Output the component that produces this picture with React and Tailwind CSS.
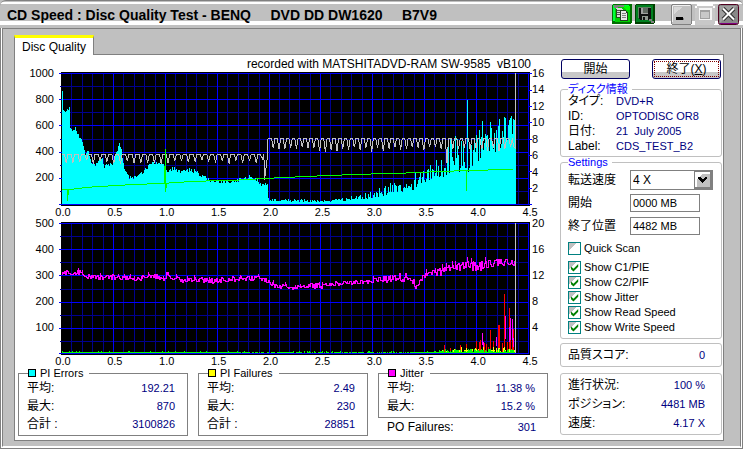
import React from "react";

/* ---------- chart geometry ---------- */

const X0 = 61;
const X_END = 516;
const X_STEP = 104; // width of 1.0 GB
const UNITS = [0, 1, 2, 3, 4, 5, 6, 7, 8, 9];

function noise(n) {
  const s = Math.sin(n * 127.1 + 11.7) * 43758.5453;
  return s - Math.floor(s);
}

function lerp(points, x) {
  for (let i = 1; i < points.length; i++) {
    if (x <= points[i][0]) {
      const [ax, ay] = points[i - 1];
      const [bx, by] = points[i];
      return ay + ((by - ay) * (x - ax)) / (bx - ax || 1);
    }
  }
  return points[points.length - 1][1];
}

const PIE = [
  [62, 91], [63, 110], [65, 112], [67, 109], [68, 110], [69, 107], [70, 128], [72, 131], [74, 130],
  [75, 128], [77, 133], [80, 138], [83, 145], [85, 154], [88, 150], [89, 155], [91, 162], [96, 164],
  [102, 158], [104, 166], [108, 165], [113, 163], [116, 153], [119, 142], [121, 150], [123, 165],
  [125, 172], [130, 178], [137, 177], [142, 173], [145, 170], [150, 163], [157, 163], [163, 165],
  [168, 172], [173, 168], [180, 171], [190, 170], [197, 172], [200, 175], [207, 179], [212, 181],
  [223, 182], [233, 181], [243, 179], [250, 177], [257, 180], [260, 185], [267, 184], [268, 200],
  [330, 201], [350, 199],
];
const PIE_LOW = [[350, 200], [375, 198], [400, 193], [420, 189], [430, 180], [440, 178], [460, 174], [470, 172]];
const PIE_HIGH = [[350, 196], [375, 190], [392, 182], [410, 174], [430, 164], [440, 150], [450, 136], [470, 134]];

// one bar top per pixel column, from x = 470 on
const PIE_LATE = [
  168, 148, 145, 166, 150, 142, 152, 135, 139, 161, 130, 158, 137, 121, 150, 143, 134, 136, 135, 142,
  151, 122, 128, 146, 149, 133, 152, 130, 140, 126, 119, 148, 144, 131, 137, 117, 118, 142, 140, 125,
  120, 118, 116, 134, 119, 120, 127,
];

function pieTop(x) {
  if (x === 468) return 100;
  if (x <= 350) return Math.round(lerp(PIE, x) + (x > 70 ? (noise(x) - 0.5) * (x > 268 ? 3 : 4) : 0));
  if (x >= 470) return PIE_LATE[x - 470];
  const r = noise(x * 3);
  return Math.round(lerp(PIE_LOW, x) + (lerp(PIE_HIGH, x) - lerp(PIE_LOW, x)) * r * r);
}

function piePath() {
  let d = `M62 204`;
  for (let x = 62; x <= X_END; x++) d += `V${pieTop(x)}H${x + 1}`;
  return d + "V204Z";
}

function writeSpeedPath() {
  let d = "M62 154.5";
  for (let x = 64.5, i = 0; x < 258; x += 6.8, i++) {
    d += `H${x}L${x + 1.8} ${160 + noise(i) * 4}L${x + 3.4} 154.5`;
  }
  d += "H261L263 160L264 154.5L265 166V180L267.5 160V143L268.5 138.5H272";
  for (let x = 272, i = 0; x < 510; x += 5.8, i++) {
    const deep = i === 30 ? 163 : 147 + noise(i + 40) * 5;
    d += `H${x}L${x + 1.8} ${deep}L${x + 3.4} 138.5`;
  }
  return d + "H513L515 148";
}

const JITTER = [
  [62, 274], [70, 272], [80, 273], [87, 276], [97, 278], [113, 277], [123, 277], [137, 279], [150, 276],
  [163, 278], [167, 275], [173, 278], [183, 281], [193, 279], [213, 281], [230, 279], [263, 278],
  [270, 284], [287, 287], [313, 286], [327, 286], [340, 283], [360, 282], [373, 281], [393, 278],
  [407, 277], [411, 281], [415, 284], [418, 285], [422, 276], [433, 272], [453, 269], [467, 266],
  [480, 266], [493, 263], [507, 261], [516, 262],
];

function jitterPath() {
  let d = "";
  let prev = 274;
  for (let x = 62; x < X_END; x++) {
    const amp = x < 380 ? 5 : x < 400 ? 7 : 9;
    const y = Math.round(lerp(JITTER, x) - 0.5 + (noise(x * 7) - 0.5) * amp);
    const spike = noise(x + 900) > 0.9 ? (x < 380 ? 2 : 4) : 0;
    const top = Math.min(y, prev) - spike;
    const bottom = Math.max(y, prev) + 1;
    d += `M${x} ${top}h1V${bottom}h-1z`;
    prev = y;
  }
  return d;
}

function pifGreenPath() {
  let d = "";
  for (let x = 62; x <= X_END; x++) {
    const r = noise(x * 5);
    if (x < 240 || x > 410 || r > 0.3) d += `M${x} 354v-${r > 0.9 ? 2 : 1}h1v${r > 0.9 ? 2 : 1}z`;
  }
  for (let x = 440; x < X_END; x++) {
    const h = 1 + Math.round(noise(x * 2) * 3);
    if (noise(x * 13) > 0.35) d += `M${x} 354v-${h}h1v${h}z`;
  }
  return d;
}

function pifYellowPath() {
  let d = "";
  for (let x = 440; x < X_END; x++) {
    const grow = x < 455 ? 3 : 6;
    const r = noise(x * 11);
    if (r > 0.4) d += `M${x} 354v-${Math.round(r * grow)}h1v${Math.round(r * grow)}z`;
  }
  return d;
}

const PIF_RED = [
  [445, 8], [451, 5], [461, 8], [467, 9], [477, 13], [480, 12], [481, 14], [485, 10], [487, 9], [489, 6],
  [491, 24], [494, 13], [499, 29], [500, 29], [503, 10], [505, 60], [508, 11], [510, 46], [511, 30], [513, 20], [514, 25],
];
const PIF_PURPLE = [[483, 21], [484, 12], [497, 17], [506, 38], [510, 27], [511, 36], [513, 35], [514, 16]];

function Grid({ top, rightTicks }) {
  const rows = UNITS.concat(10);
  const xs = Array.from({ length: 46 }, (_, i) => i);
  const lineY = (i) => Math.round(top + i * 13.1);
  return (
    <g shapeRendering="crispEdges">
      <rect x={X0} y={top - 1} width="470" height="134" fill="#000" />
      {xs.filter((i) => i % 5).map((i) => (
        <rect key={i} x={Math.round(X0 + i * 10.4)} y={top} width="1" height="132" fill="#000090" />
      ))}
      {rows.filter((i) => i % 2).map((i) => (
        <rect key={i} x="60" y={lineY(i)} width="469" height="1" fill="#000090" />
      ))}
      {xs.filter((i) => i % 5 === 0 && i > 0).map((i) => (
        <rect key={i} x={Math.round(X0 + i * 10.4)} y={top} width="1" height="132" fill="#0000ff" />
      ))}
      {rows.filter((i) => i % 2 === 0).map((i) => (
        <rect key={i} x="59" y={lineY(i)} width="470" height="1" fill="#0000ff" />
      ))}
      {rightTicks.map((y) => (
        <rect key={y} x="529" y={y} width="4" height="1" fill="#0000ff" />
      ))}
    </g>
  );
}

function Labels({ values, x, anchor, start, step }) {
  return values.map((v, i) => (
    <text key={v} x={x} y={start + i * step} textAnchor={anchor}>
      {v}
    </text>
  ));
}

const CAPACITY = ["0.0", "0.5", "1.0", "1.5", "2.0", "2.5", "3.0", "3.5", "4.0", "4.5"];

function CapacityAxis({ y }) {
  return CAPACITY.map((v, i) => (
    <text key={v} x={63 + (i * X_STEP) / 2} y={y} textAnchor="middle">
      {v}
    </text>
  ));
}

function Charts() {
  return (
    <svg viewBox="15 71 545 297" className="block w-full overflow-visible text-[11px]" role="img" aria-label="Disc Quality">
      <Grid top={73} rightTicks={[73, 90, 106, 122, 139, 155, 171, 188, 204]} />
      <path d={piePath()} fill="#00ffff" shapeRendering="crispEdges" />
      <path d={writeSpeedPath()} fill="none" stroke="#c0c0c0" shapeRendering="crispEdges" />
      <path
        d="M62 189.5H72L88 187.5L103 186.5L120 185.5L140 184.5L165 183.5L195 181.5L235 180.5L268 178.5L310 176.5L360 174.5L400 173.5L445 171.5L478 170.5L514 169.5"
        fill="none"
        stroke="#00ff00"
        shapeRendering="crispEdges"
      />
      <path d="M67 190h2v5h-1v6h-1zM164 166h1v-17h1v35h1v4h-1v4h-1v-8h-1zM467 171h1v20h-1z" fill="#00ff00" shapeRendering="crispEdges" />
      <path d="M516 73h1v76h-1z" fill="#c0c0c0" shapeRendering="crispEdges" />

      <Grid top={223} rightTicks={[]} />
      <path d={jitterPath()} fill="#ff00ff" shapeRendering="crispEdges" />
      <g shapeRendering="crispEdges">
        {PIF_RED.map(([x, h]) => (
          <rect key={x} x={x} y={354 - h} width="1" height={h} fill="#ff0000" />
        ))}
        {PIF_PURPLE.map(([x, h]) => (
          <rect key={x} x={x} y={354 - h} width="1" height={Math.round(h * 0.6)} fill="#ff00ff" />
        ))}
        <path d={pifYellowPath()} fill="#ffff00" />
        <path d={pifGreenPath()} fill="#00ff00" />
        <rect x="516" y="223" width="1" height="131" fill="#c0c0c0" />
      </g>

      <g fill="#000">
        <Labels values={["1000", "800", "600", "400", "200"]} x={54} anchor="end" start={77} step={26} />
        <Labels values={["16", "14", "12", "10", "8", "6", "4", "2"]} x={533} anchor="start" start={77} step={16.5} />
        <CapacityAxis y={216} />
        <Labels values={["500", "400", "300", "200", "100"]} x={54} anchor="end" start={227} step={26} />
        <Labels values={["20", "16", "12", "8", "4"]} x={533} anchor="start" start={227} step={26} />
        <CapacityAxis y={366} />
      </g>
    </svg>
  );
}

/* ---------- title bar ---------- */

function TitleBar() {
  return (
    <header className="flex h-7 items-center rounded-t-md border-t border-[#808080] bg-[linear-gradient(#c0c0c0_0_1px,#fff_1px_3px,#c0c0c0_3px_20px,#fff_20px_24px,#c0c0c0_24px)] pr-1 pl-[7px]">
      <h1 className="flex-1 truncate text-sm font-bold whitespace-pre">
        {"CD Speed : Disc Quality Test - BENQ     DVD DD DW1620     B7V9"}
      </h1>
      <div className="flex items-center pb-px">
        <button type="button" aria-label="Copy" className="h-5 w-5">
          <svg viewBox="0 0 20 20" className="h-5 w-5" shapeRendering="crispEdges">
            <rect width="20" height="20" rx="2" fill="#007000" />
            <path d="M1 1H17V3H3V17H1z" fill="#00ff40" />
            <path d="M3 3H18V18H3z" fill="#00d000" />
            <path d="M11 2H18V6H14z" fill="#00ff00" />
            <path d="M2 1H12V3H6V4H2z" fill="#808080" />
            <path d="M4 4H9L11 6V14H4z" fill="#d8d8d8" />
            <path d="M4.500 4.500V13.500H8" fill="none" stroke="#205020" />
            <path d="M5 6.500h4M5 8.500h4M5 10.500h4" stroke="#505050" />
            <path d="M8 6H13L16 9V17H8z" fill="#e8e8e8" />
            <path d="M8.500 6.500H13.500L15.500 9V16.500H8.500z" fill="none" stroke="#204020" />
            <path d="M10 9.500h4M10 11.500h4M10 13.500h4" stroke="#808080" />
          </svg>
        </button>
        <button type="button" aria-label="Save" className="ml-[3px] h-5 w-5">
          <svg viewBox="0 0 20 20" className="h-5 w-5" shapeRendering="crispEdges">
            <rect width="20" height="20" rx="2" fill="#004000" />
            <rect x="1" y="1" width="17" height="17" fill="#008020" />
            <path d="M3 3H16V16H5L3 14z" fill="#101010" />
            <path d="M3 3H16V4H4V14H3z" fill="#608060" />
            <path d="M7 4H13V9H7z" fill="#606860" />
            <path d="M7 4H8V9H13V10H6V4z" fill="#a0a0a0" />
            <path d="M7 12H13V16H7z" fill="#909890" />
            <path d="M8 13H10V16H8z" fill="#101010" />
            <path d="M14 15H17V17H19V19H16V17H14z" fill="#808080" />
          </svg>
        </button>
        <button type="button" aria-label="Minimize" className="ml-4 h-[21px] w-[21px]">
          <svg viewBox="0 0 21 21" className="h-[21px] w-[21px]" shapeRendering="crispEdges">
            <rect x="0.5" y="0.5" width="20" height="20" rx="2" fill="#c0c0c0" stroke="#808080" />
            <path d="M2 1H19V2H2V18H1V2z" fill="#f0f0f0" />
            <path d="M3 3H12L3 10z" fill="#d8d8d8" />
            <path d="M5 13H12V16H5z" fill="#000" />
            <path d="M6 16H13V14H12V16z" fill="#808080" />
          </svg>
        </button>
        <button type="button" aria-label="Maximize" disabled className="ml-[3px] h-[21px] w-5">
          <svg viewBox="0 0 20 21" className="h-[21px] w-5" shapeRendering="crispEdges">
            <rect width="20" height="21" rx="2" fill="#c8c8c8" />
            <path d="M2 0H18V2H20V4H18V2H2V4H0V2H2z" fill="#fff" />
            <path d="M4 4H17V16H4z" fill="#f4f4f4" />
            <path d="M5 6H15V15H5z" fill="#a0a0a0" />
            <path d="M6 8H14V14H6z" fill="#c8c8c8" />
          </svg>
        </button>
        <button type="button" aria-label="Close" className="ml-[3px] h-[21px] w-[21px]">
          <svg viewBox="0 0 21 21" className="h-[21px] w-[21px]">
            <rect x="0.5" y="0.5" width="20" height="20" rx="2" fill="#888" stroke="#500020" />
            <path d="M2 2H19L2 19z" fill="#a0a0a0" />
            <path d="M2 19.500H19" stroke="#800080" />
            <path d="M5 4.500L16 15.500M16 4.500L5 15.500" stroke="#303030" strokeWidth="4" />
            <path d="M5 4.500L16 15.500M16 4.500L5 15.500" stroke="#fff" strokeWidth="2" />
          </svg>
        </button>
      </div>
    </header>
  );
}

/* ---------- statistics ---------- */

function Stat({ label, value }) {
  return (
    <div className="flex h-[18px] items-center justify-between">
      <dt>{label}</dt>
      <dd className="text-[11px] text-[#000080]">{value}</dd>
    </div>
  );
}

function StatBox({ title, swatch, rows }) {
  return (
    <fieldset className="min-w-0 border border-[#808080] pr-3 pb-0.5 pl-2">
      <legend className="ml-px flex h-3 items-center gap-1 pr-1.5">
        <span className={`h-2 w-2 border border-black ${swatch}`} />
        <span className="text-[11px] leading-3">{title}</span>
      </legend>
      <dl>
        {rows.map(([label, value]) => (
          <Stat key={label} label={label} value={value} />
        ))}
      </dl>
    </fieldset>
  );
}

/* ---------- right column ---------- */

const BOX = "min-w-0 rounded-[3px] border border-[#c0c0c0] px-[7px]";
const LEGEND = "h-2.5 pr-1 text-[11px] leading-[10px] text-[#0000ff]";
const FIELD = "h-[18px] w-[70px] border border-[#808080] bg-white px-0.5 text-[11px] outline-none";

function ActionButton({ children, dotted }) {
  return (
    <button
      type="button"
      className="h-5 w-[69px] rounded-[3px] border border-[#000060] bg-[linear-gradient(#fff_0_12px,#c8c8c8_12px)] p-px leading-[14px]"
    >
      <span className={`block h-4 ${dotted ? "border border-dotted border-[#800000]" : "border border-transparent"}`}>
        {children}
      </span>
    </button>
  );
}

const DISC_INFO = [
  ["タイプ:", "DVD+R"],
  ["ID:", "OPTODISC OR8"],
  ["日付:", "21  July 2005"],
  ["Label:", "CDS_TEST_B2"],
];

function Check({ label, checked }) {
  return (
    <label className="flex h-[15px] items-center gap-[3px] text-[11px]">
      <span className="grid h-[13px] w-[13px]">
        <input
          type="checkbox"
          defaultChecked={checked}
          className="peer col-start-1 row-start-1 h-[13px] w-[13px] appearance-none border border-[#008080] bg-[linear-gradient(135deg,#c0c0c0_0_35%,#fff_36%)]"
        />
        <svg viewBox="0 0 13 13" className="pointer-events-none col-start-1 row-start-1 hidden h-[13px] w-[13px] peer-checked:block">
          <path d="M3 5.5V8.2L5.5 10.5L10.2 5.8V3L5.5 7.8z" fill="#008000" />
        </svg>
      </span>
      {label}
    </label>
  );
}

const SHOW = ["Show C1/PIE", "Show C2/PIF", "Show Jitter", "Show Read Speed", "Show Write Speed"];

function SidePanel() {
  return (
    <aside className="w-[164px] shrink-0 pt-1 pr-px pl-px">
      <div className="flex justify-between px-px">
        <ActionButton>開始</ActionButton>
        <ActionButton dotted>
          終了(<u>X</u>)
        </ActionButton>
      </div>

      <fieldset className={`${BOX} mt-[5px] pb-0.5`}>
        <legend className={LEGEND}>ディスク情報</legend>
        <dl className="grid grid-cols-[48px_1fr] leading-[15px]">
          {DISC_INFO.map(([k, v]) => (
            <React.Fragment key={k}>
              <dt className="h-[15px]">{k}</dt>
              <dd className="h-[15px] text-[11px] whitespace-pre text-[#000080]">{v}</dd>
            </React.Fragment>
          ))}
        </dl>
      </fieldset>

      <fieldset className={`${BOX} pb-[3px]`}>
        <legend className={LEGEND}>Settings</legend>
        <div className="grid grid-cols-[62px_1fr] items-center pt-[3px]">
          <label htmlFor="speed">転送速度</label>
          <div className="grid h-5 w-[83px]">
            <select
              id="speed"
              defaultValue="4 X"
              className="col-start-1 row-start-1 appearance-none border border-[#808080] bg-white px-0.5 outline-none"
            >
              <option>4 X</option>
            </select>
            <svg viewBox="0 0 18 18" className="pointer-events-none col-start-1 row-start-1 mt-px mr-px h-[18px] w-[18px] justify-self-end" shapeRendering="crispEdges">
              <rect width="18" height="18" fill="#808080" />
              <rect x="1" y="1" width="15" height="15" fill="#fff" />
              <path d="M8 3H16V16H3V9z" fill="#c0c0c0" />
              <path d="M4 6H6L8.500 8.500L11 6H13V8L8.500 12L4 8z" fill="#000" />
            </svg>
          </div>
          <label htmlFor="start" className="mt-1">開始</label>
          <input id="start" defaultValue="0000 MB" className={`${FIELD} mt-1`} />
          <label htmlFor="end" className="mt-[5px]">終了位置</label>
          <input id="end" defaultValue="4482 MB" className={`${FIELD} mt-[5px]`} />
        </div>
        <div className="pt-1.5 pb-1">
          <Check label="Quick Scan" />
        </div>
        {SHOW.map((s) => (
          <Check key={s} label={s} checked />
        ))}
      </fieldset>

      <dl className={`${BOX} mt-1 py-0.5 pr-4`}>
        <Stat label="品質スコア:" value="0" />
      </dl>

      <dl className={`${BOX} mt-1.5 grid gap-px py-0.5 pr-4`}>
        <Stat label="進行状況:" value="100 %" />
        <Stat label="ポジション:" value="4481 MB" />
        <Stat label="速度:" value="4.17 X" />
      </dl>
    </aside>
  );
}

export default function App() {
  return (
    <div className="flex min-h-screen flex-col bg-[#c0c0c0] font-['Liberation_Sans','Noto_Sans_CJK_JP',sans-serif] text-xs text-black [font-feature-settings:'palt']">
      <TitleBar />
      <div className="flex flex-1 flex-col border-x border-b border-[#808080] bg-white px-px pb-px">
        <main className="flex flex-1 flex-col border border-[#808080] border-b-white bg-[#c0c0c0] pt-1.5 pr-4 pb-[5px] pl-[11px]">
          <nav className="z-10 -mb-px flex">
            <button
              type="button"
              className="h-5 border-x border-t-3 border-x-[#808080] border-t-[#ffff00] bg-white px-[7px] leading-4"
            >
              Disc Quality
            </button>
          </nav>
          <div className="flex flex-1 border border-[#808080] bg-white">
            <section className="min-w-0 flex-1">
              <p className="h-4 pr-7 text-right leading-[18px] whitespace-pre">
                {"recorded with MATSHITADVD-RAM SW-9585  vB100"}
              </p>
              <Charts />
              <div className="grid grid-cols-3 items-start gap-2.5 pr-[11px] pl-[3px]">
                <StatBox
                  title="PI Errors"
                  swatch="bg-[#00ffff]"
                  rows={[["平均:", "192.21"], ["最大:", "870"], ["合計 :", "3100826"]]}
                />
                <StatBox
                  title="PI Failures"
                  swatch="bg-[#ffff00]"
                  rows={[["平均:", "2.49"], ["最大:", "230"], ["合計 :", "28851"]]}
                />
                <div>
                  <StatBox title="Jitter" swatch="bg-[#ff00ff]" rows={[["平均:", "11.38 %"], ["最大:", "15.2 %"]]} />
                  <dl className="pr-3 pl-[9px]">
                    <Stat label="PO Failures:" value="301" />
                  </dl>
                </div>
              </div>
            </section>
            <SidePanel />
          </div>
        </main>
      </div>
    </div>
  );
}
